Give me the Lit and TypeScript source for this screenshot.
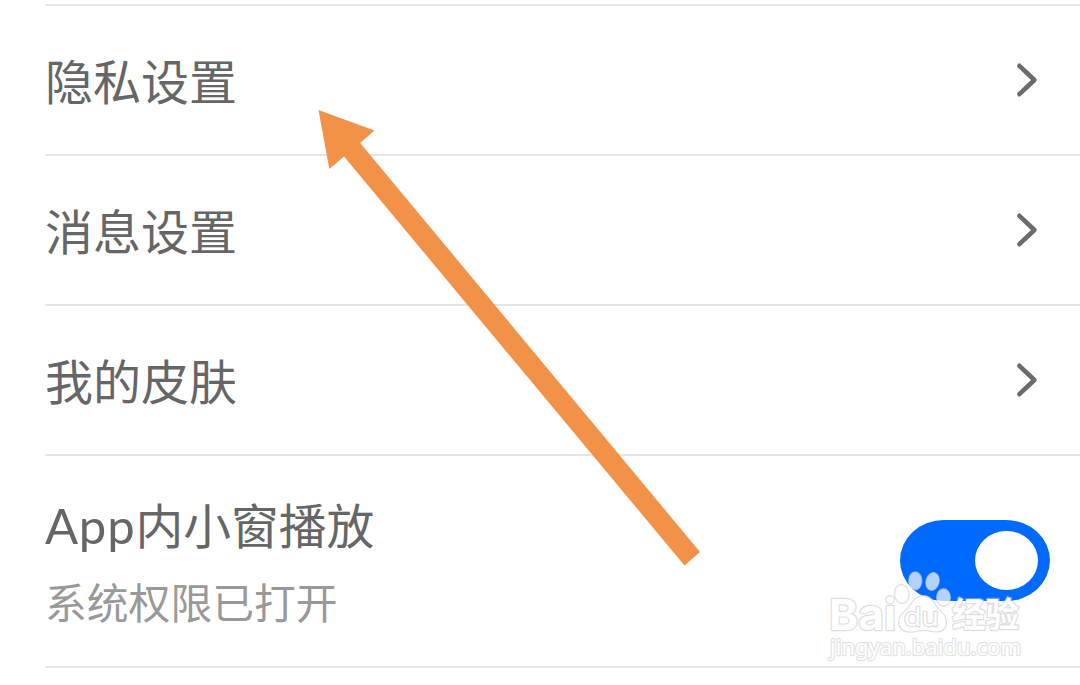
import {html, css, svg, LitElement} from 'lit';
import {customElement, property} from 'lit/decorators.js';


@customElement('settings-row')
export class SettingsRow extends LitElement {
  @property({type: String}) label = '';

  static styles = css`
    :host {
      display: flex;
      align-items: center;
      justify-content: space-between;
      box-sizing: border-box;
      height: 150px;
      padding-right: 40px;
      border-bottom: 2px solid #e5e5e5;
    }
    .label {
      font-size: 48px;
      line-height: 70px;
      color: #666666;
      padding-bottom: 2px;
    }
    .chevron {
      width: 26px;
      height: 40px;
    }
  `;
  render() {
    return html`
      <span class="label">${this.label}</span>
      <svg class="chevron" viewBox="0 0 26 40">
        <path d="M5.4 5.8 L20.4 20 L5.4 34.2" fill="none" stroke="#6b6b6b" stroke-width="4.6" stroke-linecap="round" stroke-linejoin="round" />
      </svg>
    `;
  }
}

@customElement('toggle-switch')
export class ToggleSwitch extends LitElement {
  static styles = css`
    :host {
      display: flex;
      align-items: center;
      justify-content: flex-end;
      box-sizing: border-box;
      width: 150px;
      height: 81px;
      padding-right: 12.5px;
      border-radius: 44px / 40.5px;
      background-color: #006aff;
    }
    .knob {
      width: 62.5px;
      height: 59px;
      border-radius: 50%;
      background-color: #ffffff;
    }
  `;
  render() {
    return html`<div class="knob"></div>`;
  }
}

const paw = svg`
  <g fill="#ffffff" fill-opacity="0.7" stroke="#c8c8c8" stroke-opacity="0.6" stroke-width="1.2">
    <ellipse cx="81.8" cy="33" rx="7.2" ry="9.5" transform="rotate(-8 81.8 33)" />
    <ellipse cx="95.3" cy="19.8" rx="6.6" ry="9" />
    <ellipse cx="112.5" cy="20.5" rx="6.6" ry="9" transform="rotate(14 112.5 20.5)" />
    <ellipse cx="123.5" cy="36.5" rx="6.9" ry="8.8" />
    <path fill-opacity="0.9" d="M103 34.5 C111 34.5 114 41 117 46 C121 51 127 54 126.5 62 C126 70 119 72 112 70.5 C106 69 101 69 96 70.5 C87 72.5 79 70 78.5 61 C78.5 54 84 51 88 47 C92 42 95 34.5 103 34.5 Z" />
  </g>
`;

@customElement('app-root')
export class AppRoot extends LitElement {
  static styles = css`
    :host {
      display: block;
      position: relative;
      box-sizing: border-box;
      width: 1080px;
      height: 685px;
      padding: 4px 0 0 45px;
      overflow: hidden;
      background-color: #ffffff;
      font-family: "Noto Sans CJK SC", sans-serif;
    }
    .list {
      border-top: 2px solid #e5e5e5;
    }
    .player {
      display: flex;
      justify-content: space-between;
      box-sizing: border-box;
      height: 212px;
      padding-right: 30px;
      border-bottom: 2px solid #e5e5e5;
    }
    .texts {
      padding-top: 33px;
    }
    .title {
      font-size: 47.8px;
      line-height: 70px;
      color: #666666;
    }
    .app {
      font-family: Lato, sans-serif;
      font-size: 49px;
      line-height: 1;
      letter-spacing: 0.8px;
    }
    .hint {
      margin-top: 11px;
      font-size: 41.8px;
      line-height: 62px;
      color: #999999;
    }
    .toggle {
      margin-top: 64px;
    }
    .arrow {
      position: absolute;
      left: 0;
      top: 0;
    }
    .watermark {
      position: absolute;
      left: 820px;
      top: 561px;
    }
    .mark {
      fill: #ffffff;
      stroke: #c8c8c8;
      stroke-opacity: 0.6;
      stroke-width: 2.4px;
      stroke-linejoin: round;
      paint-order: stroke;
    }
    .latin {
      font-family: Inter, "Liberation Sans", sans-serif;
      font-weight: 700;
    }
    .du {
      font-family: "Open Sans", sans-serif;
      font-weight: 500;
    }
    .cjk {
      font-weight: 700;
    }
    .url {
      font-family: "Noto Sans", sans-serif;
      font-weight: 400;
      stroke-opacity: 0.5;
    }
  `;
  render() {
    return html`
      <div class="list">
        <settings-row label="隐私设置"></settings-row>
        <settings-row label="消息设置"></settings-row>
        <settings-row label="我的皮肤"></settings-row>
        <div class="player">
          <div class="texts">
            <div class="title"><span class="app">App</span>内小窗播放</div>
            <div class="hint">系统权限已打开</div>
          </div>
          <toggle-switch class="toggle"></toggle-switch>
        </div>
      </div>

      <svg class="arrow" width="1080" height="685">
        <polygon fill="#f29249" points="318.5,110 374.5,130.5 360.2,143 700,552 684.5,565.5 344,156.5 329.3,169" />
      </svg>

      <svg class="watermark" width="220" height="110">
        ${paw}
        <text class="mark latin" x="9" y="69" font-size="43" textLength="67" lengthAdjust="spacingAndGlyphs">Bai</text>
        <text class="mark du" x="84" y="65" font-size="26" textLength="35" lengthAdjust="spacingAndGlyphs">du</text>
        <text class="mark cjk" x="132" y="66" font-size="34" textLength="67" lengthAdjust="spacingAndGlyphs">经验</text>
        <text class="mark url" x="10" y="94" font-size="22" textLength="191" lengthAdjust="spacingAndGlyphs">jingyan.baidu.com</text>
      </svg>
    `;
  }
}
